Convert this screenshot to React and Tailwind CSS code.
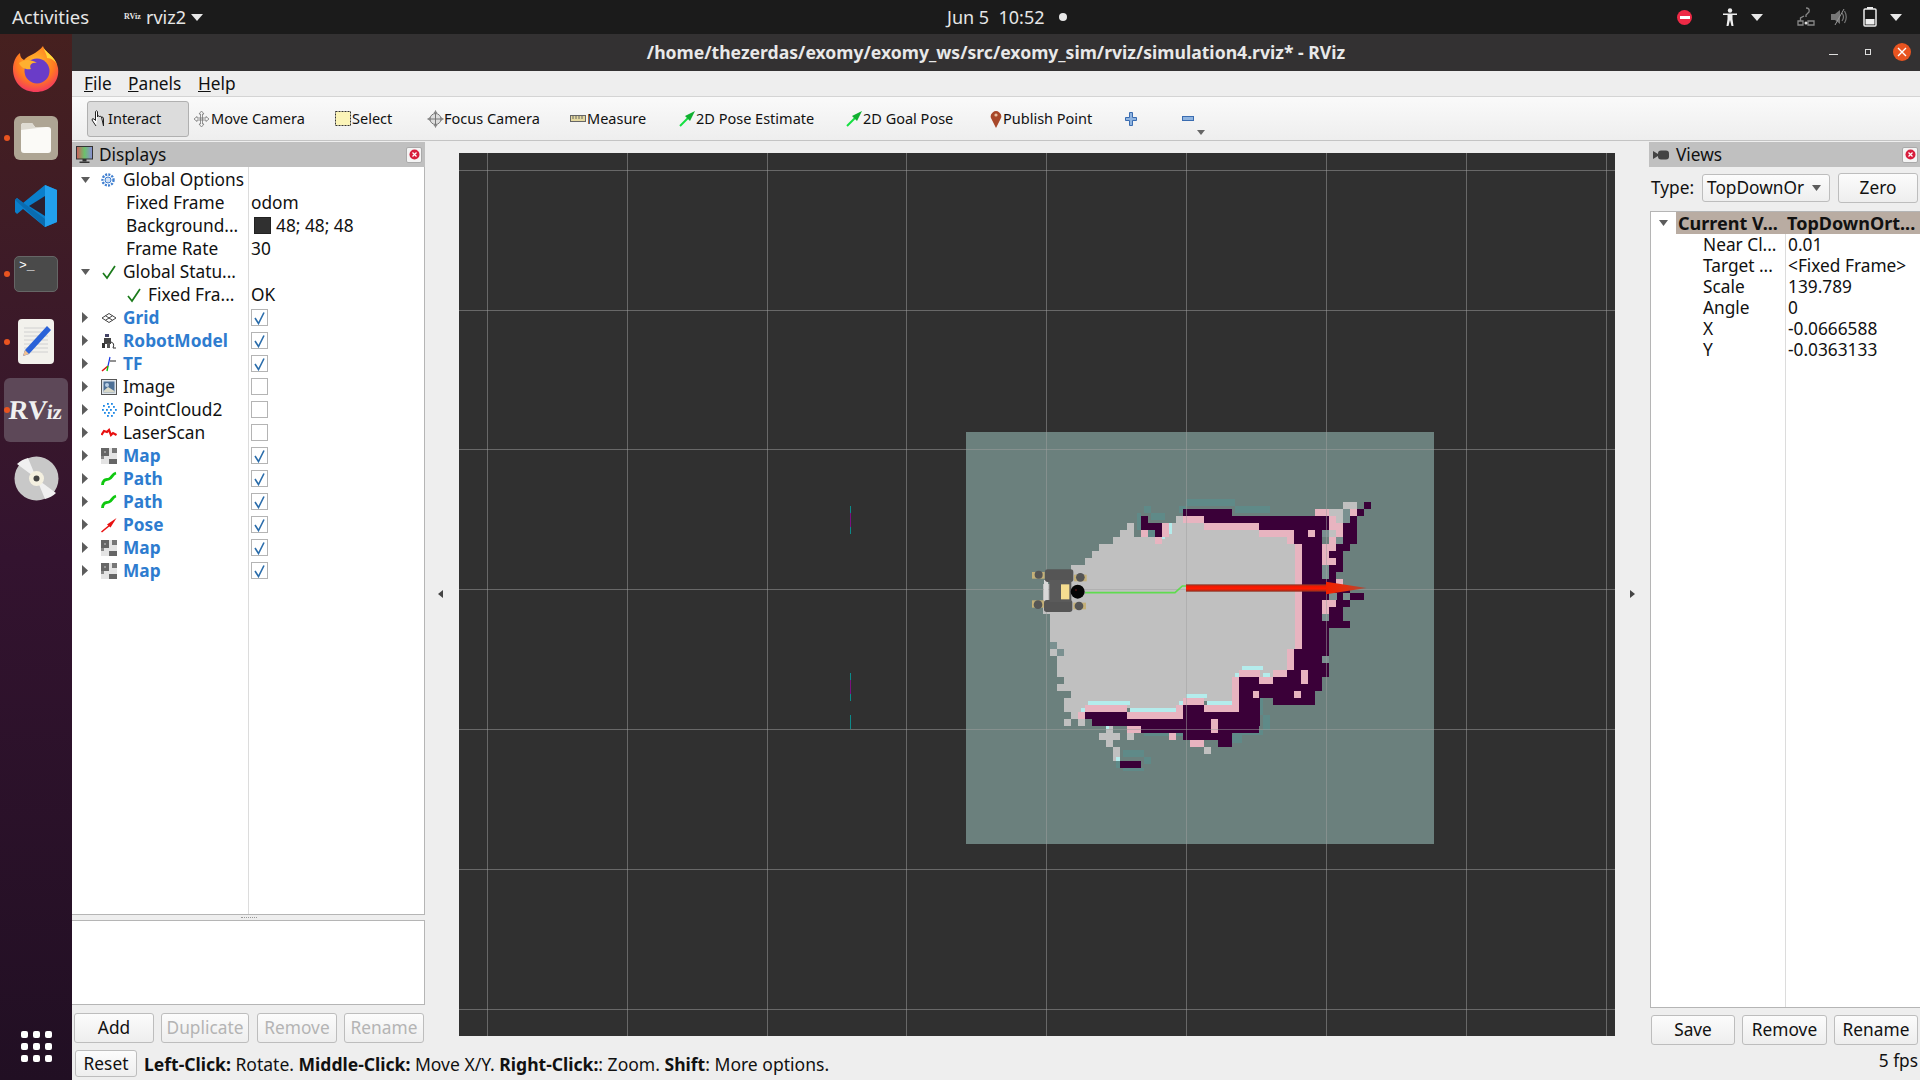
import React from 'react';

const GRAY='#c0c0c0',PINK='#e8b4c0',DARK='#3a0038',CY='#b4ecec',TEAL='#5f8a88',BG='#6b807d',LT='#7a9090';
// [y,h,x1,x2] in 3x map coordinates
const L = {
 teal:[[57,21,498,645],[78,21,645,750],[78,21,477,498],[78,21,372,393],[99,21,393,435],[99,51,351,363],[150,21,384,405],[810,22,310,372],[832,21,372,393],[864,9,310,372],[843,21,288,300],[654,51,708,728],[705,45,728,750],[750,15,640,728],[765,25,636,665],[717,21,258,279],[759,8,372,490]],
 gray:[[108,21,468,552],[129,21,321,342],[129,21,447,720],[150,21,300,342],[150,21,447,720],[171,21,279,405],[171,21,426,822],[192,21,237,825],[213,21,216,825],[234,21,195,825],[255,126,153,825],[313,68,69,153],[381,21,69,825],[402,84,90,825],[486,21,111,825],[507,21,90,111],[507,21,132,805],[528,30,111,805],[558,33,111,800],[591,21,132,640],[612,21,111,640],[633,21,153,640],[654,21,132,490],[654,9,552,640],[675,21,132,210],[675,9,322,470],[696,21,153,174],[717,21,132,153],[717,21,174,195],[87,21,927,969],[108,21,948,969],[66,21,969,1011],[150,21,927,948],[738,21,258,279],[759,21,237,300],[780,21,258,279],[801,42,279,300],[759,21,321,342],[801,21,552,573]],
 dark:[[87,21,489,636],[108,21,552,927],[129,21,717,927],[150,42,822,907],[192,315,846,907],[423,21,907,990],[444,63,907,927],[507,21,822,927],[528,21,822,906],[549,21,822,927],[570,21,800,927],[591,42,760,906],[633,42,760,885],[591,105,657,720],[612,42,720,760],[675,21,490,552],[696,21,195,322],[696,21,490,720],[717,21,216,720],[738,21,363,717],[759,21,490,635],[780,21,594,635],[843,21,300,363],[192,21,948,990],[213,21,927,969],[234,21,948,969],[255,21,927,969],[276,21,927,948],[297,42,907,948],[339,21,950,970],[339,21,990,1032],[318,21,948,990],[339,21,846,927],[360,21,948,990],[381,42,927,969],[87,21,1011,1032],[66,21,1032,1053],[108,21,990,1011],[129,63,969,1011],[108,21,363,384],[129,21,363,426],[150,21,405,426]],
 pink:[[108,21,490,552],[129,21,552,717],[150,21,717,822],[171,21,801,822],[192,315,825,846],[507,63,801,822],[570,21,758,800],[591,21,717,758],[570,21,657,720],[591,105,636,657],[654,21,490,552],[675,21,552,657],[675,21,195,322],[696,21,174,195],[696,21,322,490],[675,21,468,490],[717,43,573,594],[633,21,700,717],[570,42,843,864],[633,21,822,843],[738,21,321,363],[759,21,447,468],[780,21,510,552],[87,21,885,927],[108,42,927,948],[87,21,990,1011],[129,42,948,969],[171,21,928,948],[192,21,907,948],[213,21,907,927],[234,21,907,948],[297,21,948,969],[360,21,907,948],[381,21,907,927],[150,21,864,885],[129,42,426,447],[150,21,363,384],[171,21,405,426]],
 cy:[[129,33,447,456],[171,6,426,435],[663,12,204,330],[684,12,330,468],[685,11,183,195],[642,12,498,561],[663,12,561,636],[663,12,477,490],[558,12,666,729],[579,12,645,657],[579,12,729,750],[832,11,288,300],[738,8,258,267]],
 lt:[[150,21,907,927],[171,21,948,969],[255,42,907,927],[402,21,907,927],[528,21,906,927],[486,21,90,111],[507,21,111,132],[87,42,969,990],[339,21,970,990],[339,21,927,950]],
};
const Rects=({list,fill})=>list.map((r,i)=><rect key={i} x={r[2]} y={r[0]} width={r[3]-r[2]} height={r[1]} fill={fill}/>);

const vLines=[487,627,767,906,1046,1186,1326,1466,1606];
const hLines=[170,310,449,589,729,869,1009];

function Viewport(){
 return (
  <svg viewBox="459 153 1156 883" className="block w-[1156px] h-[883px] bg-[#303030]">
   <rect x="966" y="432" width="468" height="412" fill={BG}/>
   <g shapeRendering="crispEdges">
    <rect x="850" y="506" width="1" height="28" fill="#0c8a8a"/><rect x="850" y="513" width="1" height="14" fill="#7c1080"/>
    <rect x="850" y="673" width="1" height="28" fill="#0c8a8a"/><rect x="850" y="680" width="1" height="14" fill="#7c1080"/>
    <rect x="850" y="715" width="1" height="14" fill="#0c8a8a"/>
    <g transform="translate(1020 480) scale(0.33333)">
     <Rects list={L.teal} fill={TEAL}/>
     <Rects list={L.gray} fill={GRAY}/>
     <Rects list={L.dark} fill={DARK}/>
     <Rects list={L.pink} fill={PINK}/>
     <Rects list={L.cy} fill={CY}/>
     <Rects list={L.lt} fill={LT}/>
    </g>
    {vLines.map(x=><rect key={x} x={x} y="153" width="1" height="883" fill="#a0a0a0" fillOpacity="0.5"/>)}
    {hLines.map(y=><rect key={y} x="459" y={y} width="1156" height="1" fill="#a0a0a0" fillOpacity="0.5"/>)}
   </g>
   <g transform="translate(1020 480) scale(0.33333)">
    <polyline points="195,338 465,338 487,318 498,318" fill="none" stroke="#5fdc4f" strokeWidth="5"/>
    <defs>
     <linearGradient id="shaft" x1="0" y1="0" x2="0" y2="1"><stop offset="0" stopColor="#8a3a2a"/><stop offset="0.3" stopColor="#f01800"/><stop offset="0.6" stopColor="#ff1a00"/><stop offset="1" stopColor="#8a3020"/></linearGradient>
     <linearGradient id="headg" x1="0" y1="0" x2="1" y2="0"><stop offset="0" stopColor="#f02000"/><stop offset="0.5" stopColor="#e03010"/><stop offset="1" stopColor="#a05040"/></linearGradient>
    </defs>
    <rect x="498" y="313" width="422" height="22" fill="url(#shaft)"/>
    <polygon points="918,305 1040,324 918,343" fill="url(#headg)"/>
    {/* robot */}
    <rect x="36" y="276" width="38" height="20" fill="#c4b078"/><rect x="162" y="284" width="38" height="20" fill="#c4b078"/>
    <rect x="36" y="361" width="38" height="22" fill="#c4b078"/><rect x="160" y="368" width="38" height="20" fill="#c4b078"/>
    <rect x="72" y="300" width="12" height="70" fill="#d8d8d8"/>
    <rect x="75" y="268" width="85" height="38" rx="8" fill="#555"/>
    <rect x="72" y="360" width="85" height="36" rx="8" fill="#555"/>
    <rect x="88" y="300" width="66" height="66" fill="#5a5a5a"/>
    <rect x="123" y="313" width="25" height="45" fill="#f6de90"/>
    <circle cx="56" cy="284" r="12" fill="#555"/><circle cx="181" cy="292" r="13" fill="#555"/><circle cx="54" cy="374" r="13" fill="#555"/><circle cx="177" cy="378" r="13" fill="#555"/>
    <circle cx="173" cy="335" r="21" fill="#050505"/>
    <circle cx="168" cy="330" r="2" fill="#a02020"/>
   </g>
  </svg>
 );
}

const Right=()=><svg width="6" height="11" viewBox="0 0 6 11" className="shrink-0"><polygon points="0,0 6,5.5 0,11" fill="#5c5c5c"/></svg>;
const Down=({w=9})=><svg width={w} height="6" viewBox="0 0 9 6" className="shrink-0"><polygon points="0,0 9,0 4.5,6" fill="#5c5c5c"/></svg>;
const Tick=({s=16})=><svg width={s} height={s} viewBox="0 0 16 16"><path d="M2 9 L6 14 L14 2" fill="none" stroke="#1a7a1a" strokeWidth="1.7"/></svg>;

const IGrid=()=><svg width="16" height="16" viewBox="0 0 16 16"><path d="M8 3.5 L15 8 L8 12.5 L1 8 Z M4.5 5.7 L11.5 10.3 M11.5 5.7 L4.5 10.3" fill="none" stroke="#444" strokeWidth="1"/></svg>;
const IRobot=()=><svg width="16" height="16" viewBox="0 0 16 16"><rect x="4" y="1" width="4" height="3" fill="#446"/><rect x="3" y="5" width="7" height="6" fill="#444"/><rect x="1" y="10" width="3" height="5" fill="#333"/><rect x="6" y="10" width="3" height="5" fill="#555"/><path d="M10 9 Q14 10 12 15 L15 15" fill="none" stroke="#333" strokeWidth="1"/></svg>;
const ITF=()=><svg width="16" height="16" viewBox="0 0 16 16"><path d="M7 10 L9 1" stroke="#1a3ae0" strokeWidth="1.2"/><path d="M7 10 L1 15" stroke="#e01010" strokeWidth="1.6"/><path d="M7 10 L6 15" stroke="#10c010" strokeWidth="1.4"/><path d="M9 5 L15 5" stroke="#222" strokeWidth="1"/></svg>;
const IImage=()=><svg width="16" height="16" viewBox="0 0 16 16"><rect x="0.5" y="0.5" width="15" height="15" fill="#dfe4ea" stroke="#555"/><rect x="2.5" y="2.5" width="11" height="11" fill="#4d6f95"/><path d="M2.5 12 L7 8 L13.5 12 V13.5 H2.5Z" fill="#d8d8c8"/><circle cx="6" cy="6" r="2" fill="#b9cfe6"/></svg>;
const ICloud=()=><svg width="16" height="16" viewBox="0 0 16 16" fill="#1e88e5">{[[6,1],[10,1],[2,3],[7,4],[12,4],[1,7],[5,7],[9,7],[14,7],[3,10],[7,10],[12,10],[6,13],[10,13]].map((p,i)=><rect key={i} x={p[0]} y={p[1]} width="1.8" height="1.8"/>)}</svg>;
const ILaser=()=><svg width="16" height="16" viewBox="0 0 16 16"><path d="M0.5 10 L3 6 L6 7 L8 5 L10 10 L12 8 L15.5 10" fill="none" stroke="#e81010" strokeWidth="2.2"/></svg>;
const IMap=()=><svg width="16" height="16" viewBox="0 0 16 16" shapeRendering="crispEdges"><rect width="16" height="16" fill="#e4e4e4"/><rect width="8" height="8" fill="#666"/><rect x="11" width="5" height="5" fill="#777"/><rect y="8" width="3" height="3" fill="#888"/><rect x="8" y="11" width="8" height="5" fill="#666"/><rect x="3" y="3" width="2" height="2" fill="#999"/></svg>;
const IPath=()=><svg width="16" height="16" viewBox="0 0 16 16"><path d="M1.5 14 C2 8 5 9 8 8 C11 7 11 3 15 2" fill="none" stroke="#10c810" strokeWidth="2.8"/></svg>;
const IPose=()=><svg width="16" height="16" viewBox="0 0 16 16"><path d="M0.5 15 L9 8" stroke="#e81010" strokeWidth="1.6"/><path d="M15.5 1 L6 7.5 L9.5 10.5 Z" fill="#e81010"/></svg>;
const IGlobal=()=><svg width="14" height="14" viewBox="0 0 14 14"><circle cx="7" cy="7" r="5.5" fill="none" stroke="#3f7fd0" strokeWidth="2.4" strokeDasharray="2 1.2"/><circle cx="7" cy="7" r="3" fill="#cfe0f5" stroke="#3f7fd0"/></svg>;

const Check=({on})=><span className="flex h-[17px] w-[17px] items-center justify-center border border-[#b4b4b4] bg-white">{on?<svg width="13" height="14" viewBox="0 0 13 14"><path d="M2 7 L5.5 12.5 L11 1.5" fill="none" stroke="#2a6caa" strokeWidth="1.6"/></svg>:null}</span>;

const rows=[['Grid',IGrid,1],['RobotModel',IRobot,1],['TF',ITF,1],['Image',IImage,0],['PointCloud2',ICloud,0],['LaserScan',ILaser,0],['Map',IMap,1],['Path',IPath,1],['Path',IPath,1],['Pose',IPose,1],['Map',IMap,1],['Map',IMap,1]];

const Cell=({left,children})=><div className="flex h-[23px]"><div className="flex w-[176px] items-center truncate">{left}</div><div className="flex flex-1 items-center pl-[3px]">{children}</div></div>;

const Btn=({w,h='h-[30px]',children,dis})=><button className={`${w} ${h} shrink-0 rounded-[3px] border border-[#bdbdbd] bg-gradient-to-b from-[#fcfcfc] to-[#eeeeee] text-center leading-none ${dis?'text-[#b4b4b4]':'text-[#111]'}`}>{children}</button>;

const Close=()=><span className="flex h-[16px] w-[16px] items-center justify-center rounded-[2px] border border-[#aaa] bg-[#f4f4f4]"><svg width="11" height="11" viewBox="0 0 11 11"><circle cx="5.5" cy="5.5" r="5" fill="#d81c3c"/><path d="M3.5 3.5 L7.5 7.5 M7.5 3.5 L3.5 7.5" stroke="#fff" strokeWidth="1.2"/></svg></span>;

function Displays(){
 return (
  <div className="flex w-[353px] shrink-0 flex-col pt-px">
   <div className="flex h-[25px] items-center justify-between bg-[#c0c0c0] pl-[4px] pr-[3px]">
    <div className="flex items-center gap-[6px]">
     <svg width="17" height="18" viewBox="0 0 17 18"><defs><linearGradient id="mon" x1="0" x2="1" y1="0" y2="0"><stop offset="0" stopColor="#d05a5a"/><stop offset="0.5" stopColor="#6cc06c"/><stop offset="1" stopColor="#8a8ad8"/></linearGradient></defs><rect x="0.5" y="0.5" width="16" height="12.5" fill="url(#mon)" stroke="#333"/><rect x="6.5" y="13" width="4" height="2.5" fill="#333"/><rect x="3.5" y="15.5" width="10" height="1.5" fill="#333"/></svg>
     <span className="text-[#111]">Displays</span>
    </div>
    <Close/>
   </div>
   <div className="relative h-[748px] shrink-0 border-r border-b border-[#b5b5b5] bg-white pt-px">
    <div className="absolute bottom-0 left-[176px] top-0 w-px bg-[#dcdcdc]"/>
    <Cell left={<><span className="ml-[9px] w-[20px]"><Down/></span><span className="flex w-[21px]"><IGlobal/></span><span className="ml-[1px]">Global Options</span></>}/>
    <Cell left={<span className="pl-[54px]">Fixed Frame</span>}>odom</Cell>
    <Cell left={<span className="pl-[54px]">Background...</span>}><span className="ml-[3px] mr-[5px] h-[17px] w-[17px] border border-[#222] bg-[#303030]"/>48; 48; 48</Cell>
    <Cell left={<span className="pl-[54px]">Frame Rate</span>}>30</Cell>
    <Cell left={<><span className="ml-[9px] w-[20px]"><Down/></span><span className="flex w-[21px]"><Tick/></span><span className="ml-[1px]">Global Statu...</span></>}/>
    <Cell left={<><span className="ml-[54px] flex w-[22px]"><Tick/></span>Fixed Fra...</>}>OK</Cell>
    {rows.map(([n,I,on],i)=>(
     <div key={i} className="flex h-[23px]">
      <div className="flex w-[176px] items-center">
       <span className="ml-[10px] w-[19px]"><Right/></span>
       <span className="flex w-[22px]"><I/></span>
       <span className={on?'font-bold text-[#2e7ccf]':''}>{n}</span>
      </div>
      <div className="flex items-center pl-[3px]"><Check on={on}/></div>
     </div>
    ))}
   </div>
   <div className="flex h-[5px] shrink-0 items-center justify-center"><span className="h-px w-[16px] border-t border-dotted border-[#999]"/></div>
   <div className="h-[85px] shrink-0 border-y border-r border-[#b5b5b5] bg-white"/>
   <div className="mt-[8px] flex pl-[2px]">
    <Btn w="w-[80px]">Add</Btn>
    <div className="ml-[7px]"><Btn w="w-[88px]" dis>Duplicate</Btn></div>
    <div className="ml-[8px]"><Btn w="w-[80px]" dis>Remove</Btn></div>
    <div className="ml-[7px]"><Btn w="w-[80px]" dis>Rename</Btn></div>
   </div>
  </div>
 );
}

const vrows=[['Near Cl...','0.01'],['Target ...','<Fixed Frame>'],['Scale','139.789'],['Angle','0'],['X','-0.0666588'],['Y','-0.0363133']];

function Views(){
 return (
  <div className="flex w-[271px] shrink-0 flex-col pt-px">
   <div className="flex h-[25px] items-center justify-between bg-[#c0c0c0] pl-[4px] pr-[2px]">
    <div className="flex items-center gap-[6px]">
     <svg width="17" height="10" viewBox="0 0 17 10"><polygon points="0,1 5,4 5,6 0,9" fill="#444"/><rect x="5" y="0.5" width="11" height="9" rx="3" fill="#444"/></svg>
     <span className="text-[#111]">Views</span>
    </div>
    <Close/>
   </div>
   <div className="mt-[6px] flex h-[29px] items-center pl-[2px]">
    <span className="w-[51px]">Type:</span>
    <span className="flex h-[28px] w-[128px] items-center justify-between rounded-[3px] border border-[#bdbdbd] bg-gradient-to-b from-[#fcfcfc] to-[#eeeeee] pl-[4px] pr-[8px]"><span>TopDownOr</span><Down/></span>
    <span className="ml-[8px]"><Btn w="w-[80px]">Zero</Btn></span>
   </div>
   <div className="relative ml-px mt-[9px] h-[797px] shrink-0 border-l border-t border-b border-[#b5b5b5] bg-white">
    <div className="absolute bottom-0 left-[134px] top-0 w-px bg-[#dcdcdc]"/>
    <div className="flex h-[22px] items-center">
     <span className="ml-[8px] w-[17px]"><Down/></span>
     <div className="relative flex h-[22px] w-[244px] items-center bg-[#b9aca2] text-[18px] font-bold text-[#111]">
      <span className="w-[109px] pl-[2px]">Current V...</span><span className="pl-[2px]">TopDownOrt...</span>
     </div>
    </div>
    {vrows.map(([a,b])=>(
     <div key={a} className="flex h-[21px] items-center"><span className="w-[134px] pl-[52px]">{a}</span><span className="pl-[3px]">{b}</span></div>
    ))}
   </div>
   <div className="mt-[7px] flex pl-[2px]">
    <Btn w="w-[84px]">Save</Btn>
    <div className="ml-[7px]"><Btn w="w-[85px]">Remove</Btn></div>
    <div className="ml-[7px]"><Btn w="w-[84px]">Rename</Btn></div>
   </div>
  </div>
 );
}

const Hand=()=><svg width="18" height="20" viewBox="0 0 18 20"><path d="M6 17 L2 11 Q2 9 4 10 L5.5 11.5 V2.5 Q6.5 1 7.5 2.5 V8 M7.5 7 Q9 6 9.5 8 M9.5 7.5 Q11 6.5 11.5 8.5 M11.5 8 Q13.5 7.5 13.5 10 V17 Z" fill="#fff" stroke="#222" strokeWidth="1"/></svg>;
const MoveCam=()=><svg width="17" height="18" viewBox="0 0 17 18"><path d="M8.5 1 L11 4 H9.5 V14 H11 L8.5 17 L6 14 H7.5 V4 H6 Z M1 9 L4 6.5 V8 H13 V6.5 L16 9 L13 11.5 V10 H4 V11.5 Z" fill="#f4f4f4" stroke="#777" strokeWidth="0.8"/></svg>;
const Sel=()=><svg width="16" height="15" viewBox="0 0 16 15"><rect x="0.5" y="0.5" width="15" height="14" fill="#fbf4b8" stroke="#333" strokeDasharray="2 1"/></svg>;
const Focus=()=><svg width="17" height="18" viewBox="0 0 17 18"><circle cx="8.5" cy="9" r="5.5" fill="#ddd" stroke="#777"/><path d="M8.5 0.5 V17.5 M0.5 9 H16.5" stroke="#777"/><path d="M8.5 0.5 L6.5 3 H10.5Z M8.5 17.5 L6.5 15 H10.5Z M0.5 9 L3 7 V11Z M16.5 9 L14 7 V11Z" fill="#888"/></svg>;
const Ruler=()=><svg width="16" height="7" viewBox="0 0 16 7"><rect x="0.5" y="0.5" width="15" height="6" fill="#e5d9a0" stroke="#666"/><path d="M3 1V4M6 1V4M9 1V4M12 1V4" stroke="#666"/></svg>;
const GreenArrow=()=><svg width="16" height="16" viewBox="0 0 16 16"><path d="M1 15 L9 7" stroke="#14e040" strokeWidth="2"/><path d="M16 0 L6 5 L11 10 Z" fill="#10b030"/></svg>;
const Pin=()=><svg width="12" height="18" viewBox="0 0 12 18"><path d="M6 18 L1.5 9 A5.2 5.2 0 1 1 10.5 9 Z" fill="#a8482a"/><circle cx="6" cy="5" r="1.6" fill="#e8c0a0"/></svg>;

const Tool=({w,icon,label,active,iw='w-[18px]'})=>(
 <div className={`${w} flex h-[36px] shrink-0 items-center ${active?'rounded-[3px] border border-[#b0b0b0] bg-[#dcdcdc] pl-[2px]':''}`}>
  <span className={`${iw} flex shrink-0 items-center justify-center`}>{icon}</span>
  <span>{label}</span>
 </div>
);

function Dock(){
 const Dot=({y})=><span className="absolute left-[4px] h-[6px] w-[6px] rounded-full bg-[#e95420]" style={{top:y}}/>;
 return (
  <div className="relative flex h-full w-[72px] shrink-0 flex-col items-center bg-gradient-to-b from-[#46201f] via-[#33132f] to-[#210f23]">
   <svg width="46" height="46" viewBox="0 0 46 46" className="mt-[12px]">
    <defs>
     <radialGradient id="ff" cx="0.5" cy="0.35" r="0.75"><stop offset="0" stopColor="#ffbd2e"/><stop offset="0.55" stopColor="#ff7a20"/><stop offset="1" stopColor="#f01e78"/></radialGradient>
    </defs>
    <path d="M30 0 C31 6 43 10 45 22 C47 36 36 46 23 46 C10 46 0 37 0 23 C0 16 3 10 7 7 C7 11 9 13 11 14 C15 9 24 8 30 0Z" fill="url(#ff)"/>
    <path d="M30 0 C31 6 43 10 45 22 C44 15 38 12 34 12 C34 8 31 5 30 0Z" fill="#ffd83a"/>
    <circle cx="24" cy="25" r="12.5" fill="#6a3cc8"/>
    <path d="M6 17 C12 12 20 14 24 17 C18 16 16 20 18 23 C13 24 8 22 6 17Z" fill="#ffb030"/>
   </svg>
   <div className="mt-[24px] flex h-[44px] w-[44px] items-center justify-center rounded-[6px] bg-[#aea594]">
    <svg width="32" height="32" viewBox="0 0 32 32"><path d="M1 4 Q1 1 4 1 H12 L15 5 H28 Q31 5 31 8 V28 Q31 31 28 31 H4 Q1 31 1 28Z" fill="#fbfaf7"/><path d="M1 8 V4 Q1 1 4 1 H12 L15 5 H26" fill="#dedbd2"/></svg>
   </div>
   <svg width="42" height="42" viewBox="0 0 42 42" className="mt-[25px]">
    <path d="M30 0 L42 5 V37 L30 42 L8 24 L2 29 L0 27 V15 L2 13 L8 18 Z" fill="#0a7fcc"/>
    <path d="M30 0 L42 5 V37 L30 42 Z" fill="#22a0ee"/>
    <path d="M30 11 V31 L14 21 Z" fill="#2b2030"/>
    <path d="M0 15 L2 13 L30 34 V42 Z" fill="#0a6cb0"/>
   </svg>
   <div className="relative mt-[29px] h-[36px] w-[44px] rounded-[5px] border border-[#666] bg-[#4a4a4a] font-['Liberation_Mono',monospace] text-[13px] leading-[18px] text-white"><span className="pl-[4px]">&gt;_</span></div>
   <div className="mt-[27px] flex h-[45px] w-[36px] items-center justify-center rounded-[4px] bg-[#f2f1ec]">
    <svg width="32" height="38" viewBox="0 0 32 38"><path d="M4 5H28M4 9H28M4 13H28M4 17H28M4 21H28M4 25H28M4 29H28" stroke="#d0d0d0"/><path d="M27 3 L31 7 L9 31 L3 33 L5 27Z" fill="#2a62d8"/><path d="M5 27 L9 31 L3 33Z" fill="#f0c090"/></svg>
   </div>
   <div className="mt-[14px] flex h-[64px] w-[64px] items-center justify-center rounded-[6px] bg-[#5d4858]">
    <span className="-skew-x-6 font-['Liberation_Serif',serif] text-[27px] font-bold leading-none text-[#f0f0f0]">RV<span className="text-[21px]">iz</span></span>
   </div>
   <svg width="45" height="45" viewBox="0 0 45 45" className="mt-[14px]">
    <circle cx="22.5" cy="22.5" r="22" fill="#c8c8c8"/>
    <path d="M22.5 22.5 L3 8 A22 22 0 0 1 14 2Z M22.5 22.5 L42 37 A22 22 0 0 1 31 43Z" fill="#f0f0f0"/>
    <circle cx="22.5" cy="22.5" r="7.5" fill="#f4f0e0"/><circle cx="22.5" cy="22.5" r="3" fill="#444"/>
   </svg>
   <Dot y={101}/><Dot y={237}/><Dot y={305}/><Dot y={373}/>
   <div className="absolute left-[21px] top-[997px] grid grid-cols-3 gap-[5px]">
    {Array.from({length:9}).map((_,i)=><span key={i} className="h-[7px] w-[7px] rounded-[2px] bg-white"/>)}
   </div>
  </div>
 );
}

const TriW=()=><svg width="12" height="7" viewBox="0 0 12 7"><polygon points="0,0 12,0 6,7" fill="#e8e8e8"/></svg>;

export default function App(){
 return (
  <div className="flex h-[1080px] w-[1920px] flex-col overflow-hidden bg-[#eeeeee] font-['Noto_Sans',sans-serif] text-[17.3px] text-[#111]">
   <div className="flex h-[34px] shrink-0 items-center bg-[#1b1b1b] text-[18px] text-[#e6e6e6]">
    <span className="ml-[12px] w-[112px] text-[18.5px]">Activities</span>
    <span className="w-[22px] font-['Liberation_Serif',serif] text-[8px] font-bold">RViz</span>
    <span className="w-[45px]">rviz2</span>
    <TriW/>
    <span className="ml-[744px] w-[112px] whitespace-pre">Jun 5  10:52</span>
    <span className="h-[8px] w-[8px] rounded-full bg-[#e8e8e8]"/>
    <span className="ml-[610px] flex h-[15px] w-[15px] items-center justify-center rounded-full bg-[#ee2a46]"><span className="h-[3px] w-[10px] bg-white"/></span>
    <svg width="14" height="18" viewBox="0 0 14 18" className="ml-[31px]"><circle cx="7" cy="2.5" r="2.2" fill="#eee"/><path d="M0 5.5 H14 V7 H9.5 V11 L10.5 18 H8.5 L7 12 L5.5 18 H3.5 L4.5 11 V7 H0Z" fill="#eee"/></svg>
    <span className="ml-[14px]"><TriW/></span>
    <svg width="20" height="20" viewBox="0 0 20 20" className="ml-[33px]"><path d="M10 1 Q14 1 13 5 L10 8 V10 M2 18 V14 H7 V18Z M12 18 V14 H18 V18Z M4.5 14 V11 L8 9" fill="none" stroke="#888" strokeWidth="1.3"/><circle cx="10" cy="16" r="1.5" fill="#ddd"/></svg>
    <svg width="18" height="18" viewBox="0 0 18 18" className="ml-[14px]"><path d="M1 6 H5 L10 2 V16 L5 12 H1Z" fill="#777"/><path d="M12 5 Q15 9 12 13 M14.5 3 Q18 9 14.5 15" fill="none" stroke="#777" strokeWidth="1.2"/><path d="M14 1 L5 17" stroke="#999"/></svg>
    <svg width="14" height="20" viewBox="0 0 14 20" className="ml-[15px]"><rect x="4" y="0" width="6" height="2" fill="#eee"/><rect x="1" y="2" width="12" height="17" rx="1" fill="none" stroke="#eee" strokeWidth="1.5"/><rect x="2.5" y="12" width="9" height="5.5" fill="#eee"/></svg>
    <span className="ml-[13px]"><TriW/></span>
   </div>
   <div className="flex min-h-0 flex-1">
    <Dock/>
    <div className="flex min-w-0 flex-1 flex-col">
     <div className="relative flex h-[37px] shrink-0 items-center justify-center bg-[#333132] text-[17.6px] font-bold text-[#e8e8e8]">
      /home/thezerdas/exomy/exomy_ws/src/exomy_sim/rviz/simulation4.rviz* - RViz
      <span className="absolute right-[82px] top-[20px] h-px w-[9px] bg-[#ddd]"/>
      <span className="absolute right-[49px] top-[15px] h-[6px] w-[6px] border border-[#ddd]"/>
      <span className="absolute right-[9px] top-[9px] flex h-[18px] w-[18px] items-center justify-center rounded-full bg-[#e95420]"><svg width="10" height="10" viewBox="0 0 10 10"><path d="M1 1 L9 9 M9 1 L1 9" stroke="#fff" strokeWidth="1.4"/></svg></span>
     </div>
     <div className="flex h-[25px] shrink-0 items-center bg-[#eeeeee] pl-[12px]">
      <span className="w-[44px]"><span className="underline">F</span>ile</span>
      <span className="w-[70px]"><span className="underline">P</span>anels</span>
      <span><span className="underline">H</span>elp</span>
     </div>
     <div className="flex h-[45px] shrink-0 items-center border-y border-y-[#d4d4d4] border-b-[#c4c4c4] bg-gradient-to-b from-[#fafafa] to-[#eeeeee] pl-[15px] text-[14.5px]">
      <Tool w="w-[102px]" active icon={<Hand/>} label="Interact"/>
      <div className="w-[3px]"/>
      <Tool w="w-[142px]" iw="w-[19px]" icon={<MoveCam/>} label="Move Camera"/>
      <Tool w="w-[92px]" icon={<Sel/>} label="Select"/>
      <Tool w="w-[143px]" icon={<Focus/>} label="Focus Camera"/>
      <Tool w="w-[109px]" icon={<Ruler/>} label="Measure"/>
      <Tool w="w-[167px]" icon={<GreenArrow/>} label="2D Pose Estimate"/>
      <Tool w="w-[143px]" icon={<GreenArrow/>} label="2D Goal Pose"/>
      <Tool w="w-[137px]" iw="w-[15px]" icon={<Pin/>} label="Publish Point"/>
      <div className="w-[57px]"><svg width="12" height="14" viewBox="0 0 12 14"><path d="M4.5 0.5 H7.5 V5.5 H11.5 V8.5 H7.5 V13.5 H4.5 V8.5 H0.5 V5.5 H4.5Z" fill="#8fb4e0" stroke="#3a6cb0"/></svg></div>
      <div className="relative w-[24px]"><svg width="12" height="5" viewBox="0 0 12 5"><rect x="0.5" y="0.5" width="11" height="4" fill="#8fb4e0" stroke="#3a6cb0"/></svg>
       <svg width="8" height="5" viewBox="0 0 8 5" className="absolute left-[15px] top-[14px]"><polygon points="0,0 8,0 4,5" fill="#666"/></svg></div>
     </div>
     <div className="flex h-[907px] shrink-0">
      <Displays/>
      <div className="flex w-[34px] shrink-0 items-center justify-center pr-[4px]"><svg width="5" height="8" viewBox="0 0 5 8" className="mt-[-2px]"><polygon points="5,0 0,4 5,8" fill="#444"/></svg></div>
      <div className="w-[1156px] shrink-0 pt-[12px]"><Viewport/></div>
      <div className="flex w-[34px] shrink-0 items-center justify-center pl-[1px]"><svg width="5" height="8" viewBox="0 0 5 8" className="mt-[-2px]"><polygon points="0,0 5,4 0,8" fill="#444"/></svg></div>
      <Views/>
     </div>
     <div className="flex flex-1 items-start pl-[3px] pr-[2px] pt-[2px]">
      <Btn w="w-[62px]" h="h-[27px]">Reset</Btn>
      <span className="ml-[7px] mt-[1px] whitespace-nowrap text-[17.55px]"><b>Left-Click:</b> Rotate. <b>Middle-Click:</b> Move X/Y. <b>Right-Click:</b>: Zoom. <b>Shift</b>: More options.</span>
      <span className="ml-auto -mt-[2px]">5 fps</span>
     </div>
    </div>
   </div>
  </div>
 );
}
